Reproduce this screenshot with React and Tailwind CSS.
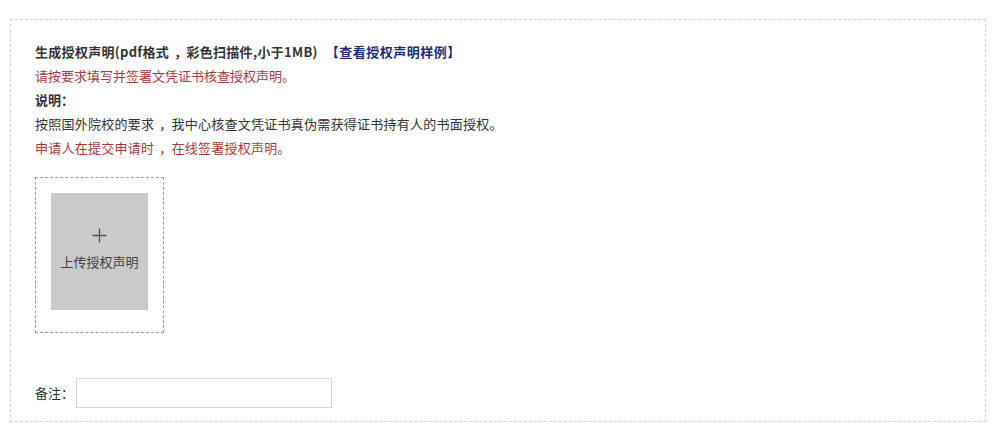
import React from 'react';

const Comma = () => <span className="ml-[5px] mr-[-1px]">，</span>;

export default function App() {
  return (
    <div className="w-[1000px] h-[430px] bg-white pt-[19px] pl-[10px] font-['Microsoft_YaHei','Noto_Sans_CJK_SC',sans-serif] text-[13px] text-[#333]">
      <div className="w-[976px] h-[403px] border border-dashed border-[#d4d4d4] pl-[24px] pt-[20px]">
        {/* header notes */}
        <div className="leading-[24px]">
          <div className="font-bold">
            <span className="tracking-[0.3px]">生成授权声明(pdf格式<Comma />彩色扫描件,小于1MB)</span>
            <a className="ml-[8px] text-[#1f2a7a] cursor-pointer tracking-[0.5px]">【查看授权声明样例】</a>
          </div>
          <div className="text-[#a83a3a]">请按要求填写并签署文凭证书核查授权声明。</div>
          <div className="font-bold">说明：</div>
          <div className="tracking-[0.25px]">按照国外院校的要求<Comma />我中心核查文凭证书真伪需获得证书持有人的书面授权。</div>
          <div className="text-[#a83a3a] tracking-[0.25px]">申请人在提交申请时<Comma />在线签署授权声明。</div>
        </div>

        {/* upload */}
        <div className="mt-[17px] w-[129px] h-[156px] border border-dashed border-[#999] pl-[15px] pt-[15px]">
          <div className="w-[97px] h-[117px] bg-[#cacaca] flex flex-col items-center pt-[35px] cursor-pointer">
            <svg width="15" height="15" viewBox="0 0 15 15">
              <path d="M7.5 0.5V14.5M0.5 7.5H14.5" stroke="#555" strokeWidth="1.3" fill="none" />
            </svg>
            <span className="mt-[9px] text-[#444]">上传授权声明</span>
          </div>
        </div>

        {/* remark */}
        <div className="mt-[45px] flex items-center">
          <span className="mr-[2px]">备注：</span>
          <input className="w-[256px] h-[30px] border border-[#d6d6d6] outline-none px-2" />
        </div>
      </div>
    </div>
  );
}
